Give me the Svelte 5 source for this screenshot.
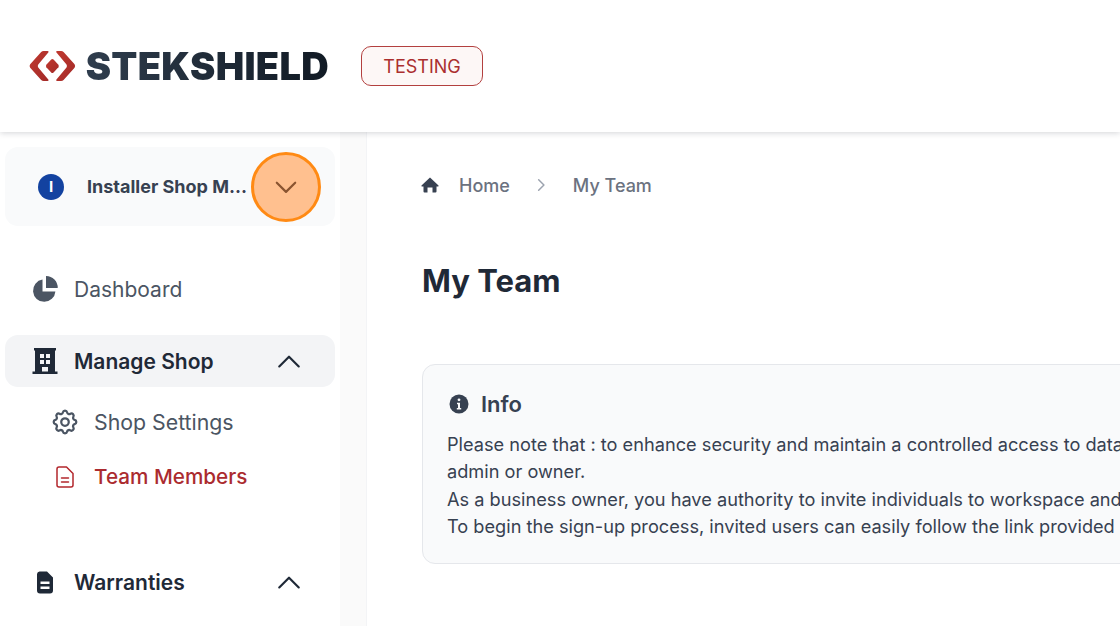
<script>
  const lines = [
    "Please note that : to enhance security and maintain a controlled access to data",
    "admin or owner.",
    "As a business owner, you have authority to invite individuals to workspace and",
    "To begin the sign-up process, invited users can easily follow the link provided",
  ];
</script>

<div class="page">
  <header class="topbar">
    <div class="logo">
      <svg class="logo-mark" viewBox="0 0 48 32" width="48" height="32">
        <defs>
          <linearGradient id="red" x1="0" y1="0" x2="1" y2="1">
            <stop offset="0" stop-color="#c0392f" />
            <stop offset="1" stop-color="#a32a28" />
          </linearGradient>
        </defs>
        <path d="M12.500 1.500 Q13.500 .5 15 .5 L19 .5 Q20.500 .5 20 2 L9.500 14.500 Q8.500 16 9.500 17.500 L20 30 Q20.500 31.500 19 31.500 L15 31.500 Q13.500 31.500 12.500 30.500 L1.200 17.800 Q0 16 1.200 14.200 Z" fill="url(#red)" />
        <path d="M35.500 1.500 Q34.500 .5 33 .5 L29 .5 Q27.500 .5 28 2 L38.500 14.500 Q39.500 16 38.500 17.500 L28 30 Q27.500 31.500 29 31.500 L33 31.500 Q34.500 31.500 35.500 30.500 L46.800 17.800 Q48 16 46.800 14.200 Z" fill="url(#red)" />
        <path d="M22.800 9.400 Q24 8.300 25.200 9.400 L30.200 14.800 Q31 16 30.200 17.200 L25.200 22.600 Q24 23.700 22.800 22.600 L17.800 17.200 Q17 16 17.800 14.800 Z" fill="url(#red)" />
      </svg>
      <span class="logo-text">STEKSHIELD</span>
    </div>
    <span class="env">TESTING</span>
  </header>

  <div class="body">
    <aside class="sidebar">
      <div class="shop">
        <span class="avatar">I</span>
        <span class="shop-name">Installer Shop M...</span>
        <span class="highlight">
          <svg viewBox="0 0 24 24" width="26" height="26" fill="none" stroke="#8a5430" stroke-width="2" stroke-linecap="round" stroke-linejoin="round"><path d="M3.500 8 L12 16.500 L20.500 8" /></svg>
        </span>
      </div>

      <nav class="nav">
        <div class="item dash">
          <svg class="ic" viewBox="0 0 28 28" width="28" height="28" fill="#4b5563">
            <path d="M11.500 4.600 A11.200 11.200 0 1 0 24.400 16.500 L11.500 16.500 Z" />
            <path d="M15 1 A11.600 11.600 0 0 1 26.700 13 L15 13 Z" />
          </svg>
          <span>Dashboard</span>
        </div>

        <div class="item group open">
          <svg class="ic" viewBox="0 0 28 28" width="28" height="28" fill="#1f2937">
            <path fill-rule="evenodd" d="M3 1 H25 V3.500 H24 V24.500 H26.500 V27 H1.500 V24.500 H4 V3.500 H3 Z M9 7 V11 H13 V7 Z M15 7 V11 H19 V7 Z M9 13 V17 H13 V13 Z M15 13 V17 H19 V13 Z M11 20 V24.500 H17 V20 Z" />
          </svg>
          <span>Manage Shop</span>
          <svg class="caret" viewBox="0 0 24 24" width="26" height="26" fill="none" stroke="#1f2937" stroke-width="2" stroke-linecap="round" stroke-linejoin="round"><path d="M3 17 L12 8 L21 17" /></svg>
        </div>

        <div class="sub settings">
          <svg class="ic" viewBox="0 0 24 24" width="30" height="30" fill="none" stroke="#4b5563" stroke-width="1.800" stroke-linecap="round" stroke-linejoin="round">
            <path d="M10.300 4.300c.4-1.800 3-1.800 3.400 0a1.700 1.700 0 0 0 2.600 1.100c1.500-.9 3.300.8 2.400 2.400a1.700 1.700 0 0 0 1 2.500c1.800.4 1.800 3 0 3.400a1.700 1.700 0 0 0-1 2.600c.9 1.500-.9 3.300-2.400 2.400a1.700 1.700 0 0 0-2.600 1c-.4 1.800-3 1.800-3.400 0a1.700 1.700 0 0 0-2.600-1c-1.500.9-3.300-.9-2.400-2.400a1.700 1.700 0 0 0-1-2.600c-1.800-.4-1.800-3 0-3.400a1.700 1.700 0 0 0 1-2.500c-.9-1.600.9-3.300 2.400-2.400a1.700 1.700 0 0 0 2.600-1.100Z" />
            <circle cx="12" cy="12" r="3" />
          </svg>
          <span>Shop Settings</span>
        </div>

        <div class="sub team">
          <svg class="ic" viewBox="0 0 24 24" width="24" height="24" fill="none" stroke="#b3272d" stroke-width="1.500" stroke-linecap="round" stroke-linejoin="round">
            <path d="M6 2 H13.500 L20 8.500 V20 A2 2 0 0 1 18 22 H6 A2 2 0 0 1 4 20 V4 A2 2 0 0 1 6 2 Z" />
            <path d="M8.500 13 H15.500 M8.500 17 H15.500" />
          </svg>
          <span>Team Members</span>
        </div>

        <div class="item group warranties">
          <svg class="ic" viewBox="0 0 28 28" width="28" height="28" fill="#1f2937">
            <path fill-rule="evenodd" d="M8.500 3.500 H16 L22 9.500 V22.500 A3 3 0 0 1 19 25.500 H9 A3 3 0 0 1 6 22.500 V6 A3 3 0 0 1 8.500 3.500 Z M9.500 13.500 V16 H18.500 V13.500 Z M9.500 18.500 V21 H18.500 V18.500 Z" />
          </svg>
          <span>Warranties</span>
          <svg class="caret" viewBox="0 0 24 24" width="26" height="26" fill="none" stroke="#1f2937" stroke-width="2" stroke-linecap="round" stroke-linejoin="round"><path d="M3 17 L12 8 L21 17" /></svg>
        </div>
      </nav>
    </aside>

    <div class="gutter"></div>

    <main class="main">
      <div class="crumbs">
        <svg viewBox="0 0 20 20" width="20" height="20" fill="#374151">
          <path d="M10 2.500 L18.500 10.500 Q19 11.500 18 11.500 H16.500 V16.500 Q16.500 17.500 15.500 17.500 H12.500 V12.500 H7.500 V17.500 H4.500 Q3.500 17.500 3.500 16.500 V11.500 H2 Q1 11.500 1.500 10.500 Z" />
        </svg>
        <span class="crumb">Home</span>
        <svg class="sep" viewBox="0 0 12 12" width="14" height="14" fill="none" stroke="#9ca3af" stroke-width="1.300" stroke-linecap="round" stroke-linejoin="round"><path d="M4 1.500 L8.500 6 L4 10.500" /></svg>
        <span class="crumb">My Team</span>
      </div>

      <h1>My Team</h1>

      <section class="info">
        <div class="info-head">
          <svg viewBox="0 0 20 20" width="20" height="20">
            <circle cx="10" cy="10" r="9.500" fill="#374151" />
            <circle cx="10" cy="5.800" r="1.400" fill="#f9fafb" />
            <path d="M8 8.800 H11 V14 H12.200 V15.500 H7.800 V14 H9 V10.300 H8 Z" fill="#f9fafb" />
          </svg>
          <span>Info</span>
        </div>
        {#each lines as line}
          <p>{line}</p>
        {/each}
      </section>
    </main>
  </div>
</div>

<style>
  :global(body) {
    margin: 0;
    overflow: hidden;
    background: #fff;
  }

  .page {
    width: 1120px;
    height: 626px;
    overflow: hidden;
    font-family: Inter, "Liberation Sans", sans-serif;
    color: #1f2937;
  }

  .topbar {
    height: 132px;
    box-sizing: border-box;
    display: flex;
    align-items: center;
    padding-left: 29px;
    gap: 32px;
    background: #fff;
    box-shadow: 0 1px 6px rgba(17, 24, 39, 0.18);
    position: relative;
    z-index: 2;
  }

  .logo {
    display: flex;
    align-items: center;
    gap: 10px;
    width: 300px;
  }

  .logo-text {
    font-size: 38px;
    font-weight: 900;
    letter-spacing: 0.3px;
    line-height: 40px;
    background: linear-gradient(90deg, #2f3d4d, #111a24);
    background-clip: text;
    -webkit-background-clip: text;
    color: transparent;
  }

  .env {
    box-sizing: border-box;
    width: 122px;
    height: 40px;
    display: flex;
    align-items: center;
    justify-content: center;
    border: 1.500px solid #b3403f;
    border-radius: 10px;
    background: #fdf7f6;
    color: #ab2f2f;
    font-size: 18px;
  }

  .body {
    display: flex;
    height: 494px;
  }

  .sidebar {
    width: 340px;
    flex: none;
    box-sizing: border-box;
    padding: 15px 5px 0;
  }

  .gutter {
    width: 27px;
    flex: none;
    background: #fafafa;
    border-right: 1px solid #f3f4f6;
    box-sizing: border-box;
  }

  .shop {
    height: 79px;
    display: flex;
    align-items: center;
    border-radius: 13px;
    background: #f9fafb;
    padding-left: 33px;
    position: relative;
  }

  .avatar {
    width: 26px;
    height: 26px;
    border-radius: 50%;
    background: #1342a0;
    color: #fff;
    font-size: 15px;
    font-weight: 700;
    display: flex;
    align-items: center;
    justify-content: center;
  }

  .shop-name {
    margin-left: 23px;
    font-size: 18px;
    font-weight: 700;
    color: #374151;
    white-space: nowrap;
  }

  .highlight {
    position: absolute;
    left: 246px;
    top: 5px;
    box-sizing: border-box;
    width: 70px;
    height: 70px;
    border-radius: 50%;
    border: 3.500px solid #ff8a14;
    background: #ffc08f;
    display: flex;
    align-items: center;
    justify-content: center;
  }

  .nav {
    display: flex;
    flex-direction: column;
  }

  .item {
    height: 52px;
    display: flex;
    align-items: center;
    padding-left: 26px;
    border-radius: 13px;
    font-size: 21px;
    color: #4b5563;
  }

  .ic {
    flex: none;
  }

  .item > span {
    margin-left: 15px;
  }

  .dash {
    margin-top: 37px;
  }

  .group {
    font-weight: 600;
    color: #1f2937;
    position: relative;
  }

  .open {
    margin-top: 20px;
    margin-bottom: 7px;
    background: #f3f4f6;
  }

  .caret {
    position: absolute;
    left: 271px;
    top: 13px;
  }

  .sub {
    height: 55px;
    display: flex;
    align-items: center;
    padding-left: 45px;
    font-size: 21.300px;
    color: #4b5563;
  }

  .settings > span {
    margin-left: 14px;
  }

  .team {
    color: #ab2b2f;
    font-weight: 500;
    font-size: 20.700px;
    padding-left: 48px;
  }

  .team > span {
    margin-left: 17px;
  }

  .warranties {
    margin-top: 52px;
  }

  .main {
    flex: 1;
    min-width: 0;
    padding: 39px 0 0 53px;
    overflow: hidden;
  }

  .crumbs {
    height: 28px;
    display: flex;
    align-items: center;
    font-size: 18px;
    color: #6b7280;
    font-weight: 500;
  }

  .crumb {
    margin-left: 19px;
  }

  .sep {
    margin-left: 24px;
    margin-right: 6px;
  }

  h1 {
    margin: 62px 0 0 2px;
    font-size: 31px;
    line-height: 40px;
    font-weight: 700;
    color: #1f2937;
  }

  .info {
    margin: 63px 0 0 2px;
    width: 900px;
    height: 200px;
    box-sizing: border-box;
    padding: 25px 0 0 24px;
    border: 1px solid #e5e7eb;
    border-radius: 13px;
    background: #f9fafb;
  }

  .info-head {
    display: flex;
    align-items: center;
    gap: 12px;
    padding-left: 2px;
    height: 28px;
    margin-bottom: 13px;
    font-size: 22px;
    font-weight: 600;
    color: #374151;
  }

  .info p {
    margin: 0;
    font-size: 18.200px;
    line-height: 27.400px;
    color: #374151;
    white-space: nowrap;
  }
</style>
